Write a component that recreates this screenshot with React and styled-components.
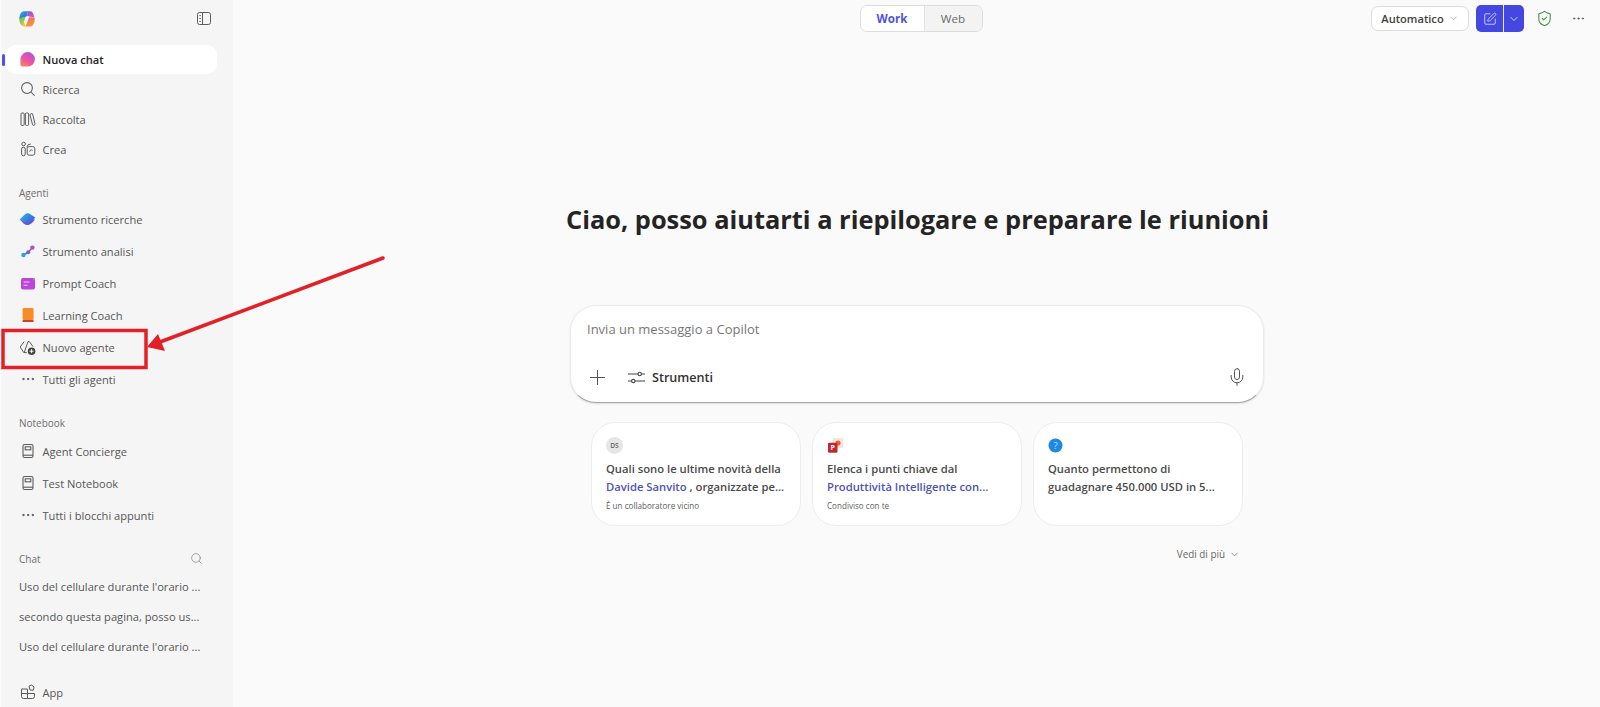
import React from "react";
import styled, { createGlobalStyle } from "styled-components";
import { Search, ChevronDown, MoreHorizontal, SquarePen, ShieldCheck, Ellipsis, Mic } from "lucide-react";

const Global = createGlobalStyle`
  html, body { margin: 0; padding: 0; height: 100%; background: #fafafa; overflow: hidden; }
  #root { height: 100%; }
  * { box-sizing: border-box; }
  body { font-family: "Open Sans", "Noto Sans", "Liberation Sans", sans-serif; color: #424242; }
`;

const Page = styled.div`
  position: relative;
  display: flex;
  width: 1600px;
  height: 707px;
  overflow: hidden;
  background: #fafafa;
`;

const Sidebar = styled.nav`
  width: 233px;
  flex: none;
  display: flex;
  flex-direction: column;
  background: #f5f5f5;
  border-left: 1px solid #fbfbfb;
  padding: 0 16px 0 5px;
`;

const SideHead = styled.div`
  height: 45px;
  flex: none;
  display: flex;
  align-items: center;
  justify-content: space-between;
  padding: 0 5px 8px 12px;
  color: #616161;
`;

const Row = styled.div`
  position: relative;
  height: ${p => p.$h || 30}px;
  flex: none;
  display: flex;
  align-items: center;
  gap: 6.5px;
  padding-left: 13px;
  font-size: 11.1px;
  white-space: nowrap;
  color: ${p => (p.$active ? "#242424" : "#555")};
  font-weight: ${p => (p.$active ? 600 : 400)};
  background: ${p => (p.$active ? "#fff" : "transparent")};
  border-radius: 10px;
  margin-top: ${p => p.$mt || 0}px;
`;

const IconSlot = styled.span`
  width: 17px;
  height: 17px;
  flex: none;
  display: flex;
  align-items: center;
  justify-content: center;
`;

const Indicator = styled.span`
  position: absolute;
  left: -4px;
  top: 9px;
  width: 2.5px;
  height: 12px;
  border-radius: 2px;
  background: #4f52e8;
`;

const SectionLabel = styled.div`
  height: ${p => p.$h || 24}px;
  flex: none;
  display: flex;
  align-items: center;
  justify-content: space-between;
  padding: 0 14px 0 13px;
  margin-top: ${p => p.$mt || 0}px;
  font-size: 10px;
  color: #6e6e6e;
`;

const ChatRow = styled.div`
  height: 30px;
  flex: none;
  display: flex;
  align-items: center;
  padding-left: 13px;
  font-size: 11.15px;
  color: #555;
  white-space: nowrap;
`;

const Main = styled.main`
  flex: 1;
  min-width: 0;
  display: flex;
  flex-direction: column;
`;

const TopBar = styled.header`
  position: relative;
  height: 37px;
  flex: none;
  display: flex;
  align-items: center;
  justify-content: center;
  margin-left: 9px;
`;

const Toggle = styled.div`
  display: flex;
  width: 123px;
  height: 27px;
  border: 1px solid #dcdcdc;
  border-radius: 7px;
  overflow: hidden;
`;

const ToggleItem = styled.div`
  flex: ${p => (p.$on ? "0 0 64px" : 1)};
  display: flex;
  align-items: center;
  justify-content: center;
  font-size: 11.6px;
  font-weight: ${p => (p.$on ? 700 : 400)};
  color: ${p => (p.$on ? "#4f52d9" : "#6b6b6b")};
  background: ${p => (p.$on ? "#fff" : "#f3f3f3")};
  border-right: ${p => (p.$on ? "1px solid #e2e2e2" : "none")};
`;

const TopActions = styled.div`
  position: absolute;
  right: 8px;
  top: 5px;
  display: flex;
  align-items: center;
`;

const ModelButton = styled.div`
  width: 98px;
  height: 25px;
  display: flex;
  align-items: center;
  justify-content: center;
  gap: 4px;
  margin-right: 7px;
  background: #fff;
  border: 1px solid #dcdcdc;
  border-radius: 7px;
  font-size: 11.1px;
  font-weight: 600;
  color: #424242;
`;

const SplitButton = styled.div`
  display: flex;
  width: 48px;
  height: 27px;
  background: #4448e0;
  border-radius: 5px;
  overflow: hidden;
`;

const SplitPart = styled.div`
  display: flex;
  align-items: center;
  justify-content: center;
  flex: ${p => (p.$w ? `0 0 ${p.$w}px` : 1)};
  border-right: ${p => (p.$w ? "1px solid #e8e8ff" : "none")};
  color: #d6d8ff;
`;

const ShieldSlot = styled.div`
  width: 40px;
  display: flex;
  justify-content: center;
  color: #3f9142;
`;

const MoreSlot = styled.div`
  width: 28px;
  display: flex;
  justify-content: center;
  color: #555;
`;

const Center = styled.div`
  width: 694px;
  margin: 0 0 0 337px;
  display: flex;
  flex-direction: column;
`;

const Title = styled.h1`
  margin: 167px 0 0 -4px;
  height: 30px;
  line-height: 30px;
  font-size: 25.4px;
  font-weight: 700;
  color: #242424;
  white-space: nowrap;
`;

const Composer = styled.div`
  height: 98px;
  margin-top: 71px;
  padding: 14px 16px 0;
  display: flex;
  flex-direction: column;
  background: #fff;
  border: 1px solid #ececec;
  border-bottom: 1px solid #a8a8a8;
  border-radius: 26px;
  box-shadow: 0 1px 2px rgba(0, 0, 0, 0.12);
`;

const Placeholder = styled.div`
  font-size: 13px;
  line-height: 18px;
  color: #777;
`;

const ComposerTools = styled.div`
  margin-top: 29px;
  display: flex;
  align-items: center;
  color: #555;
`;

const ToolLabel = styled.span`
  margin-left: 6px;
  font-size: 12.6px;
  font-weight: 600;
  color: #333;
`;

const ToolSpacer = styled.div`
  flex: 1;
`;

const PlusSlot = styled.div`
  width: 40px;
  display: flex;
  padding-left: 2px;
`;

const Cards = styled.div`
  margin: 19px 21px 0 21px;
  display: grid;
  grid-template-columns: repeat(3, 210px);
  justify-content: space-between;
`;

const Card = styled.div`
  height: 104px;
  padding: 14px 14px 0;
  background: #fff;
  border: 1px solid #ededed;
  border-radius: 24px;
  display: flex;
  flex-direction: column;
`;

const CardIcon = styled.div`
  height: 17px;
  display: flex;
  align-items: center;
`;

const Avatar = styled.span`
  width: 17px;
  height: 17px;
  border-radius: 50%;
  background: #e6e6e6;
  display: flex;
  align-items: center;
  justify-content: center;
  font-size: 6.6px;
  font-weight: 600;
  color: #616161;
`;

const CardText = styled.div`
  margin-top: 6px;
  font-size: 11.25px;
  line-height: 18px;
  font-weight: 600;
  color: #4a4a4a;
  white-space: nowrap;
`;

const Mention = styled.span`
  color: #4f52b2;
`;

const CardNote = styled.div`
  margin-top: 4px;
  font-size: 8.1px;
  line-height: 12px;
  color: #616161;
`;

const More = styled.div`
  display: flex;
  justify-content: flex-end;
  align-items: center;
  gap: 4px;
  margin: 21px 24px 0 0;
  font-size: 9.9px;
  color: #666;
`;

const Annotation = styled.svg`
  position: absolute;
  left: 0;
  top: 0;
  pointer-events: none;
`;

const CopilotLogo = () => (
  <svg width="18" height="18" viewBox="0 0 18 18">
    <defs>
      <linearGradient id="lgA" x1="0" y1="0" x2="1" y2="1">
        <stop offset="0" stopColor="#25b4dc" />
        <stop offset="1" stopColor="#2b5fe0" />
      </linearGradient>
      <linearGradient id="lgB" x1="0" y1="0" x2="1" y2="1">
        <stop offset="0" stopColor="#7a5be6" />
        <stop offset="1" stopColor="#e85a9c" />
      </linearGradient>
      <linearGradient id="lgC" x1="0" y1="0" x2="0.6" y2="1">
        <stop offset="0" stopColor="#38c070" />
        <stop offset="1" stopColor="#f2cf30" />
      </linearGradient>
      <linearGradient id="lgD" x1="0" y1="0" x2="0.3" y2="1">
        <stop offset="0" stopColor="#f2607a" />
        <stop offset="1" stopColor="#f69a30" />
      </linearGradient>
    </defs>
    <path d="M6 1.2H10L8.6 6.4 1.4 9C1.2 5 3 1.2 6 1.2Z" fill="url(#lgA)" />
    <path d="M9.8 1.2H12C14.2 1.2 15.4 3 16.4 7.6L11.2 6.6 9 6Z" fill="url(#lgB)" />
    <path d="M1.4 8.6L7.6 6.6 6 12.2 7.8 16.4H6C3 16.4 1.2 13 1.4 8.6Z" fill="url(#lgC)" />
    <path d="M16.6 7.4C17 12 15.2 16.6 12 16.6H7.4L9.4 12 10.6 7.2Z" fill="url(#lgD)" />
    <path d="M8.4 6.8H11L9.7 11.2H7.1Z" fill="#fafafa" />
  </svg>
);

const PanelIcon = () => (
  <svg width="16" height="15" viewBox="0 0 16 15" fill="none" stroke="#5c5c5c" strokeWidth="1">
    <rect x="1.5" y="1.5" width="13" height="12" rx="2" />
    <path d="M6.5 1.5v12M3.4 4.6h1.4M3.4 7.5h1.4M3.4 10.4h1.4" />
  </svg>
);

const SearchIcon = () => (
  <svg width="16" height="16" viewBox="0 0 16 16" fill="none" stroke="#5c5c5c" strokeWidth="1.05">
    <circle cx="7" cy="7" r="5.4" />
    <path d="M11 11l3.6 3.6" />
  </svg>
);

const LibraryIcon = () => (
  <svg width="16" height="16" viewBox="0 0 16 16" fill="none" stroke="#5c5c5c" strokeWidth="1">
    <rect x="1" y="2" width="3.2" height="12.4" rx="1" />
    <rect x="5.4" y="2" width="3.2" height="12.4" rx="1" />
    <path d="M10 3.4l1.6-.8c.5-.2.9 0 1 .4l2.4 9.8c.1.6-.1 1-.6 1.2l-.8.3c-.5.2-.9 0-1-.5L10 4Z" />
  </svg>
);

const ChatBubble = () => (
  <svg width="17" height="17" viewBox="0 0 16 16">
    <defs>
      <linearGradient id="cb" x1="0.8" y1="0" x2="0.1" y2="1">
        <stop offset="0" stopColor="#b64bd8" />
        <stop offset="0.6" stopColor="#ee5a9a" />
        <stop offset="1" stopColor="#f58a5a" />
      </linearGradient>
    </defs>
    <path d="M8.2 1A6.8 6.8 0 0 1 8.2 14.6H3C1.8 14.6 1.2 13.8 1.3 12.8L1.4 7.8A6.8 6.8 0 0 1 8.2 1Z" fill="url(#cb)" />
  </svg>
);

const CreateIcon = () => (
  <svg width="16" height="16" viewBox="0 0 16 16" fill="none" stroke="#5c5c5c" strokeWidth="1">
    <circle cx="3.6" cy="3" r="1.8" />
    <rect x="1.6" y="6.2" width="3.6" height="8.6" rx="1.8" />
    <path d="M6.8 6.2a4 4 0 0 1 4-3.2" />
    <rect x="7.2" y="5.6" width="7.6" height="8.6" rx="2" />
    <path d="M9.6 10.6a1.8 1.8 0 0 1 3-1.2" />
  </svg>
);

const ResearchIcon = () => (
  <svg width="18" height="16" viewBox="0 0 18 16">
    <defs>
      <linearGradient id="ri" x1="0" y1="0.2" x2="1" y2="0.8">
        <stop offset="0" stopColor="#2bb6e8" />
        <stop offset="1" stopColor="#3d58d8" />
      </linearGradient>
    </defs>
    <path d="M1 8.5C3 11 6 14.4 8.6 14.4 11.4 14.4 15 11.4 17 8.4Z" fill="#7d4fc8" />
    <path d="M0.8 8.2L6.8 2.6C8 1.6 9.6 1.6 10.8 2.2L17.2 6.4C14.6 9.6 11.6 12.2 9 12.2 6.4 12.2 3 10 0.8 8.2Z" fill="url(#ri)" />
  </svg>
);

const AnalysisIcon = () => (
  <svg width="16" height="16" viewBox="0 0 16 16">
    <path d="M3.5 12L8 9.5" stroke="#7e6bd8" strokeWidth="1.8" />
    <path d="M8 9.5L12.2 5" stroke="#b45ac8" strokeWidth="1.8" />
    <circle cx="3.4" cy="12" r="2.2" fill="#2aa8d8" />
    <circle cx="8.2" cy="9.3" r="2" fill="#6a60d8" />
    <circle cx="12.4" cy="4.6" r="2.2" fill="#b44fc0" />
  </svg>
);

const PromptIcon = () => (
  <svg width="16" height="16" viewBox="0 0 16 16">
    <rect x="1" y="3" width="14" height="11.5" rx="2" fill="#bb45d8" />
    <path d="M3.6 7h6M3.6 10.2h4" stroke="#f0c8fa" strokeWidth="1.1" />
    <path d="M11.6 1.5l1.4 2.4 2.2-.8-1 2.8z" fill="#d27ae8" />
  </svg>
);

const LearningIcon = () => (
  <svg width="16" height="16" viewBox="0 0 16 16">
    <rect x="2.6" y="1" width="11" height="12" rx="1" fill="#f78d2a" />
    <rect x="2.6" y="13" width="11" height="2" rx=".6" fill="#c8442a" />
  </svg>
);

const NewAgentIcon = () => (
  <svg width="17" height="17" viewBox="0 0 17 17" fill="none" stroke="#5c5c5c" strokeWidth="1">
    <path d="M5.2 2.6L1.2 8l3.6 5.6h3" />
    <path d="M5.2 13.6L9 2.6h1.4l3.6 5" />
    <circle cx="12.6" cy="12.2" r="3.8" fill="#444" stroke="none" />
    <path d="M12.6 10.2v4M10.6 12.2h4" stroke="#fff" strokeWidth="1" />
  </svg>
);

const AppIcon = () => (
  <svg width="16" height="16" viewBox="0 0 16 16" fill="none" stroke="#5c5c5c" strokeWidth="1">
    <path d="M1.5 5h6v9.5h-4a2 2 0 0 1-2-2zM7.5 9.5h7v3a2 2 0 0 1-2 2h-5M1.5 9.5h6" />
    <path d="M9 2.2l2.4-1.2 2.6 1.8-.6 3.4-3.4-.2z" />
  </svg>
);

const BookIcon = () => (
  <svg width="16" height="16" viewBox="0 0 16 16" fill="none" stroke="#5c5c5c" strokeWidth="1.1">
    <rect x="3" y="1.5" width="10" height="13" rx="1.6" />
    <rect x="5.2" y="3.8" width="5.6" height="3" />
    <path d="M3 12.2h10" />
  </svg>
);

const PlusIcon = () => (
  <svg width="17" height="17" viewBox="0 0 17 17" fill="none" stroke="#555" strokeWidth="1">
    <path d="M8.5 1v15M1 8.5h15" />
  </svg>
);

const ToolsIcon = () => (
  <svg width="19" height="17" viewBox="0 0 19 17" fill="none" stroke="#444" strokeWidth="1.1">
    <path d="M1 5h10M14.4 5H18M1 12h3.6M8 12h10" />
    <circle cx="12.7" cy="5" r="1.7" />
    <circle cx="6.3" cy="12" r="1.7" />
  </svg>
);

const PowerPointIcon = () => (
  <svg width="17" height="17" viewBox="0 0 17 17">
    <rect x="6" y="1.5" width="10" height="9" rx="1" fill="#fbe3da" stroke="#ddd" strokeWidth=".5" />
    <circle cx="11" cy="6" r="2.6" fill="#e8613a" />
    <rect x="1" y="5.8" width="9.5" height="10" rx="1.4" fill="#c4262e" />
    <text x="3.4" y="13.4" fontSize="7" fontWeight="700" fill="#fff" fontFamily="Open Sans">P</text>
  </svg>
);

const HelpBadge = () => (
  <svg width="15" height="15" viewBox="0 0 15 15">
    <circle cx="7.5" cy="7.5" r="7" fill="#1e88e5" />
    <text x="7.5" y="11" textAnchor="middle" fontSize="9.5" fill="#cfe6fb" fontFamily="Open Sans">?</text>
  </svg>
);

const Dots = () => <Ellipsis size={16} strokeWidth={1.4} color="#444" />;

const main = [
  [<SearchIcon />, "Ricerca"],
  [<LibraryIcon />, "Raccolta"],
  [<CreateIcon />, "Crea"],
];
const agents = [
  [<ResearchIcon />, "Strumento ricerche"],
  [<AnalysisIcon />, "Strumento analisi"],
  [<PromptIcon />, "Prompt Coach"],
  [<LearningIcon />, "Learning Coach"],
  [<NewAgentIcon />, "Nuovo agente"],
  [<Dots />, "Tutti gli agenti"],
];
const notebooks = [
  [<BookIcon />, "Agent Concierge"],
  [<BookIcon />, "Test Notebook"],
  [<Dots />, "Tutti i blocchi appunti"],
];
const chats = [
  "Uso del cellulare durante l'orario ...",
  "secondo questa pagina, posso us...",
  "Uso del cellulare durante l'orario ...",
];

export default function App() {
  return (
    <Page>
      <Global />
      <Sidebar>
        <SideHead>
          <CopilotLogo />
          <PanelIcon />
        </SideHead>
        <Row $active $h={29}>
          <Indicator />
          <IconSlot><ChatBubble /></IconSlot>
          Nuova chat
        </Row>
        {main.map(([icon, label]) => (
          <Row key={label}>
            <IconSlot>{icon}</IconSlot>
            {label}
          </Row>
        ))}
        <SectionLabel $mt={18} $h={21}>Agenti</SectionLabel>
        {agents.map(([icon, label]) => (
          <Row key={label} $h={32}>
            <IconSlot>{icon}</IconSlot>
            {label}
          </Row>
        ))}
        <SectionLabel $mt={16} $h={24}>Notebook</SectionLabel>
        {notebooks.map(([icon, label]) => (
          <Row key={label} $h={32}>
            <IconSlot>{icon}</IconSlot>
            {label}
          </Row>
        ))}
        <SectionLabel $mt={15} $h={25}>
          Chat
          <Search size={13} strokeWidth={1.2} color="#777" />
        </SectionLabel>
        {chats.map((c, i) => (
          <ChatRow key={i}>{c}</ChatRow>
        ))}
        <Row $h={32} $mt={15}>
          <IconSlot><AppIcon /></IconSlot>
          App
        </Row>
      </Sidebar>
      <Main>
        <TopBar>
          <Toggle>
            <ToggleItem $on>Work</ToggleItem>
            <ToggleItem>Web</ToggleItem>
          </Toggle>
          <TopActions>
            <ModelButton>
              Automatico
              <ChevronDown size={11} strokeWidth={1.2} color="#777" />
            </ModelButton>
            <SplitButton>
              <SplitPart $w={28}>
                <SquarePen size={14} strokeWidth={1.5} />
              </SplitPart>
              <SplitPart>
                <ChevronDown size={12} strokeWidth={2} />
              </SplitPart>
            </SplitButton>
            <ShieldSlot>
              <ShieldCheck size={17} strokeWidth={1.5} />
            </ShieldSlot>
            <MoreSlot>
              <MoreHorizontal size={15} strokeWidth={1.5} />
            </MoreSlot>
          </TopActions>
        </TopBar>
        <Center>
          <Title>Ciao, posso aiutarti a riepilogare e preparare le riunioni</Title>
          <Composer>
            <Placeholder>Invia un messaggio a Copilot</Placeholder>
            <ComposerTools>
              <PlusSlot>
                <PlusIcon />
              </PlusSlot>
              <ToolsIcon />
              <ToolLabel>Strumenti</ToolLabel>
              <ToolSpacer />
              <Mic size={20} strokeWidth={1.2} />
            </ComposerTools>
          </Composer>
          <Cards>
            <Card>
              <CardIcon><Avatar>DS</Avatar></CardIcon>
              <CardText>
                Quali sono le ultime novità della
                <br />
                <Mention>Davide Sanvito</Mention> , organizzate pe...
              </CardText>
              <CardNote>È un collaboratore vicino</CardNote>
            </Card>
            <Card>
              <CardIcon><PowerPointIcon /></CardIcon>
              <CardText>
                Elenca i punti chiave dal
                <br />
                <Mention>Produttività Intelligente con...</Mention>
              </CardText>
              <CardNote>Condiviso con te</CardNote>
            </Card>
            <Card>
              <CardIcon><HelpBadge /></CardIcon>
              <CardText>
                Quanto permettono di
                <br />
                guadagnare 450.000 USD in 5...
              </CardText>
            </Card>
          </Cards>
          <More>
            Vedi di più
            <ChevronDown size={11} strokeWidth={1.5} />
          </More>
        </Center>
      </Main>
      <Annotation width="1600" height="707" viewBox="0 0 1600 707">
        <rect x="3" y="330.5" width="143" height="37" fill="none" stroke="#e32027" strokeWidth="3.5" />
        <path d="M383 258L160 342" stroke="#e32027" strokeWidth="3.5" strokeLinecap="round" />
        <path d="M147 347L158 334L165 351Z" fill="#e32027" />
      </Annotation>
    </Page>
  );
}
